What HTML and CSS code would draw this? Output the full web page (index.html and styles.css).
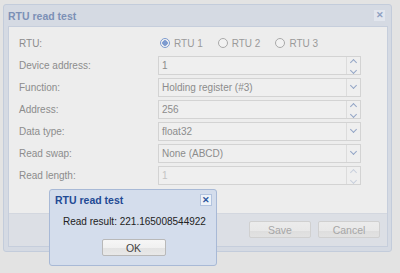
FILE: index.html
```html
<!DOCTYPE html>
<html lang="en">
<head>
    <meta charset="UTF-8">
    <title>RTU read test</title>
    <link rel="stylesheet" href="styles.css">
</head>
<body>
    <div class="dialog">
        <div class="dialog-title">
            <span>RTU read test</span>
            <span class="close-btn">&#x2715;</span>
        </div>
        <div class="dialog-frame">
            <div class="form">
                <div class="row">
                    <label>RTU:</label>
                    <div class="radios">
                        <span class="radio checked"></span><span class="radio-text">RTU 1</span>
                        <span class="radio"></span><span class="radio-text">RTU 2</span>
                        <span class="radio"></span><span class="radio-text">RTU 3</span>
                    </div>
                </div>
                <div class="row">
                    <label>Device address:</label>
                    <div class="field"><span class="value">1</span><span class="spin"><i class="up"></i><i class="down"></i></span></div>
                </div>
                <div class="row">
                    <label>Function:</label>
                    <div class="field"><span class="value">Holding register (#3)</span><span class="drop"><i class="down"></i></span></div>
                </div>
                <div class="row">
                    <label>Address:</label>
                    <div class="field"><span class="value">256</span><span class="spin"><i class="up"></i><i class="down"></i></span></div>
                </div>
                <div class="row">
                    <label>Data type:</label>
                    <div class="field"><span class="value">float32</span><span class="drop"><i class="down"></i></span></div>
                </div>
                <div class="row">
                    <label>Read swap:</label>
                    <div class="field"><span class="value">None (ABCD)</span><span class="drop"><i class="down"></i></span></div>
                </div>
                <div class="row">
                    <label>Read length:</label>
                    <div class="field disabled"><span class="value">1</span><span class="spin"><i class="up"></i><i class="down"></i></span></div>
                </div>
            </div>
            <div class="button-pane">
                <button class="btn">Save</button>
                <button class="btn">Cancel</button>
            </div>
        </div>
    </div>

    <div class="popup">
        <div class="popup-title">
            <span>RTU read test</span>
            <span class="popup-close">&#x2715;</span>
        </div>
        <div class="popup-body">Read result: 221.165008544922</div>
        <div class="popup-buttons">
            <button class="ok-btn">OK</button>
        </div>
    </div>
</body>
</html>
```

FILE: styles.css
```css
body {
    margin: 0;
    padding: 4px 0 0 3px;
    background-color: #e3e3e3;
    font-family: "Liberation Sans", Arial, sans-serif;
    font-size: 10px;
    color: #8a8a8a;
}

/* main dialog (dimmed behind the modal) */
.dialog {
    width: 387px;
    height: 246px;
    border: 1px solid #c3ccdb;
    border-radius: 3px;
    background-color: #d5dae3;
}

.dialog-title {
    height: 21px;
    display: flex;
    align-items: center;
    justify-content: space-between;
    padding: 0 6px 0 4px;
    font-size: 10.5px;
    font-weight: bold;
    color: #7c90b6;
}

.close-btn {
    width: 11px;
    height: 11px;
    background-color: #e2e6ee;
    color: #8fa0c2;
    font-size: 9px;
    line-height: 11px;
    text-align: center;
}

.dialog-frame {
    margin: 0 3px 0 4px;
    border: 1px solid #c6cedc;
    height: 219px;
    display: flex;
    flex-direction: column;
}

.form {
    background-color: #ededed;
    padding: 5px 0 0 10px;
    height: 181px;
}

.row {
    height: 22px;
    display: flex;
    align-items: center;
}

.row label {
    width: 139px;
    color: #8c8c8c;
}

.radios {
    display: flex;
    align-items: center;
    padding-left: 2px;
}

.radio {
    width: 8px;
    height: 8px;
    border: 1px solid #a9a9a9;
    border-radius: 50%;
    background-color: #f2f2f2;
    margin-right: 4px;
}

.radio.checked {
    border-color: #7d9bd0;
    background: radial-gradient(circle, #7d9bd0 0, #7d9bd0 2.5px, #f2f2f2 3px);
}

.radio-text {
    margin-right: 15px;
    color: #9a9a9a;
}

.field {
    width: 201px;
    height: 17px;
    border: 1px solid #d3d3d3;
    background-color: #efefef;
    display: flex;
    align-items: center;
}

.field .value {
    flex: 1;
    padding-left: 3px;
    color: #8c8c8c;
}

.field.disabled .value {
    color: #c4c4c4;
}

.spin,
.drop {
    width: 13px;
    height: 17px;
    border-left: 1px solid #dcdcdc;
    display: flex;
    flex-direction: column;
    align-items: center;
    justify-content: center;
    gap: 3px;
}

.spin i,
.drop i {
    display: block;
    width: 4px;
    height: 4px;
    border-color: #93a5c6;
    border-style: solid;
    border-width: 0;
}

.spin i.up {
    border-top-width: 1.5px;
    border-left-width: 1.5px;
    transform: rotate(45deg);
    margin-top: 2px;
}

.spin i.down,
.drop i.down {
    border-bottom-width: 1.5px;
    border-right-width: 1.5px;
    transform: rotate(45deg);
}

.drop i.down {
    margin-top: -3px;
}

.field.disabled i {
    border-color: #c9d0dd;
}

.button-pane {
    flex: 1;
    background-color: #dcdfe5;
    border-top: 1px solid #d3d7df;
    display: flex;
    justify-content: flex-end;
    align-items: flex-start;
    gap: 7px;
    padding: 7px 7px 0 0;
}

.btn {
    width: 62px;
    height: 17px;
    border: 1px solid #d0d0d0;
    border-radius: 2px;
    background: linear-gradient(#ececec 0, #e8e8e8 60%, #dedede 61%, #e2e2e2 100%);
    font-family: "Liberation Sans", Arial, sans-serif;
    font-size: 10.5px;
    color: #a6a6a6;
    padding: 0;
}

/* modal message box */
.popup {
    position: absolute;
    left: 49px;
    top: 189px;
    width: 166px;
    height: 75px;
    border: 1px solid #a8b9d6;
    border-radius: 3px;
    background-color: #d4ddec;
}

.popup-title {
    height: 20px;
    display: flex;
    align-items: center;
    justify-content: space-between;
    padding: 0 4px 0 5px;
    font-size: 10.5px;
    font-weight: bold;
    color: #1f4a94;
}

.popup-close {
    width: 10px;
    height: 10px;
    border: 1px solid #b2c3de;
    background-color: #eef2f8;
    color: #2d57a0;
    font-size: 9px;
    line-height: 10px;
    text-align: center;
    font-weight: bold;
}

.popup-body {
    padding: 6px 0 0 13px;
    color: #222;
    height: 23px;
    white-space: nowrap;
}

.popup-buttons {
    display: flex;
    justify-content: center;
    padding-left: 1px;
}

.ok-btn {
    width: 64px;
    height: 17px;
    border: 1px solid #b9b9b9;
    border-radius: 2px;
    background: linear-gradient(#f6f6f6 0, #f0f0f0 55%, #e3e3e3 56%, #e8e8e8 100%);
    font-family: "Liberation Sans", Arial, sans-serif;
    font-size: 10.5px;
    color: #444;
    padding: 0;
}
```
